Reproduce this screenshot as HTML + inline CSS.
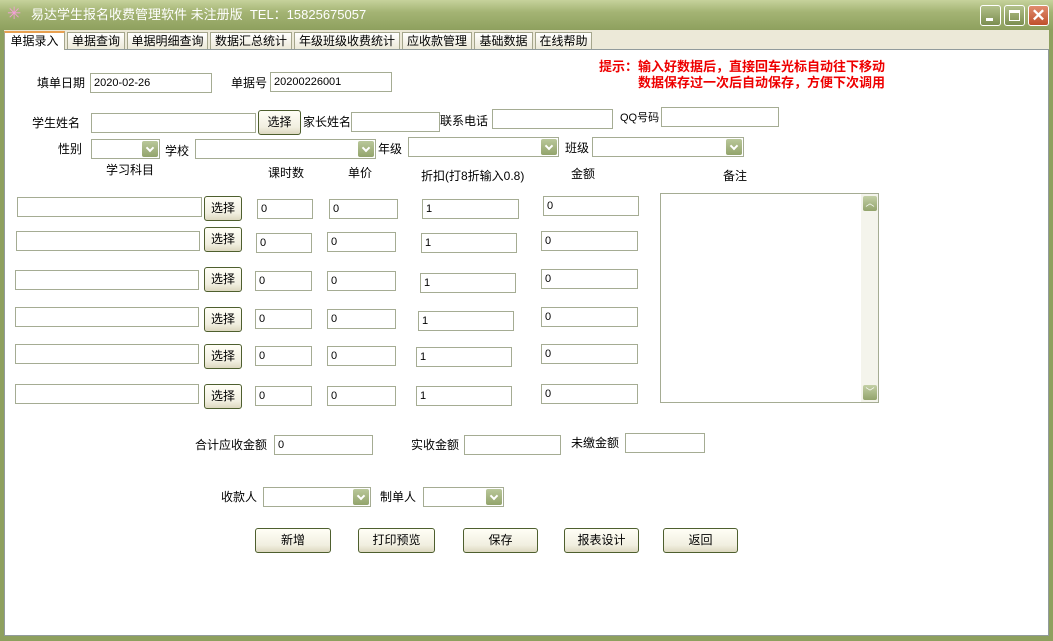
<!DOCTYPE html>
<html><head><meta charset="utf-8"><style>
*{margin:0;padding:0;box-sizing:border-box}
body{width:1053px;height:641px;overflow:hidden;position:relative;background:#ece9d8;font-family:"Liberation Sans","Noto Sans CJK SC","WenQuanYi Zen Hei",sans-serif;font-size:12px;color:#000}
.a{position:absolute}
.tb{left:0;top:0;width:1053px;height:30px;background:linear-gradient(#c6d29c,#a4b474 40%,#8ea05e);}
.t{white-space:nowrap;line-height:16px}
.i{position:absolute;height:20px;border:1px solid #a5ac93;background:#fff;font-size:11px;line-height:18px;padding-left:3px}
.b{position:absolute;height:25px;border:1px solid #4e5f2e;border-radius:3px;background:linear-gradient(#fffef6,#f1efe0 70%,#dcd8c0);text-align:center;line-height:23px;font-size:12px}
.c{position:absolute;height:20px;border:1px solid #a5ac93;background:#fff}
.c:after{content:"";position:absolute;right:1px;top:1px;width:16px;height:16px;background:linear-gradient(#b9c79a,#93a46c);border-radius:2px}
.c:before{content:"";position:absolute;right:6px;top:5px;width:4px;height:4px;border-right:2px solid #fff;border-bottom:2px solid #fff;transform:rotate(45deg);z-index:2}
.tab{position:absolute;top:32px;height:17px;border:1px solid #a5a68c;border-bottom:none;background:linear-gradient(#fff,#ece9d8);font-size:12px;line-height:16px;text-align:center}
</style></head><body>
<div class="a tb"></div>
<div class="a" style="left:0;top:30px;width:4px;height:611px;background:#8ea05e"></div>
<div class="a" style="right:0;top:30px;width:4px;height:611px;background:#8ea05e"></div>
<div class="a" style="left:0;top:636px;width:1053px;height:5px;background:#8ea05e"></div>
<div class="a t" style="left:7px;top:6px;color:#f4a0d8;font-size:17px">✳</div>
<div class="a t" style="left:31px;top:7px;color:#fff;font-size:13px">易达学生报名收费管理软件 未注册版&nbsp; TEL：15825675057</div>
<div class="a" style="left:980px;top:5px;width:21px;height:21px;border:1px solid #fff;border-radius:3px;background:linear-gradient(#b2c08a,#7c8e50)"><div class="a" style="left:5px;top:12px;width:7px;height:3px;background:#fff"></div></div>
<div class="a" style="left:1004px;top:5px;width:21px;height:21px;border:1px solid #fff;border-radius:3px;background:linear-gradient(#b2c08a,#7c8e50)"><div class="a" style="left:4px;top:4px;width:11px;height:11px;border:1px solid #fff;border-top-width:3px"></div></div>
<div class="a" style="left:1028px;top:5px;width:21px;height:21px;border:1px solid #fff;border-radius:3px;background:linear-gradient(#e08c6e,#c0502c);color:#fff;font-size:17px;line-height:19px;text-align:center;font-weight:bold">✕</div>
<div class="a" style="left:4px;top:49px;width:1045px;height:587px;background:#fff;border:1px solid #919b9c"></div>
<div class="tab" style="left:4px;width:61px;top:31px;height:19px;background:#fff;border-top:2px solid #e8a050">单据录入</div>
<div class="tab" style="left:67px;width:58px">单据查询</div>
<div class="tab" style="left:127px;width:81px">单据明细查询</div>
<div class="tab" style="left:210px;width:82px">数据汇总统计</div>
<div class="tab" style="left:294px;width:106px">年级班级收费统计</div>
<div class="tab" style="left:402px;width:70px">应收款管理</div>
<div class="tab" style="left:474px;width:59px">基础数据</div>
<div class="tab" style="left:535px;width:57px">在线帮助</div>

<div class="a t" style="left:599px;top:59px;color:#e00;font-weight:bold;font-size:13px">提示：输入好数据后，直接回车光标自动往下移动</div>
<div class="a t" style="left:638px;top:75px;color:#e00;font-weight:bold;font-size:13px">数据保存过一次后自动保存，方便下次调用</div>

<div class="a t" style="left:37px;top:75px">填单日期</div><div class="i" style="left:90px;top:73px;width:122px">2020-02-26</div>
<div class="a t" style="left:231px;top:75px">单据号</div><div class="i" style="left:270px;top:72px;width:122px">20200226001</div>

<div class="a t" style="left:32px;top:115px">学生姓名</div><div class="i" style="left:91px;top:113px;width:165px"></div>
<div class="b" style="left:258px;top:110px;width:43px">选择</div>
<div class="a t" style="left:303px;top:114px">家长姓名</div><div class="i" style="left:351px;top:112px;width:89px"></div>
<div class="a t" style="left:440px;top:113px">联系电话</div><div class="i" style="left:492px;top:109px;width:121px"></div>
<div class="a t" style="left:620px;top:110px;font-size:11px">QQ号码</div><div class="i" style="left:661px;top:107px;width:118px"></div>

<div class="a t" style="left:58px;top:141px">性别</div><div class="c" style="left:91px;top:139px;width:69px"></div>
<div class="a t" style="left:165px;top:143px">学校</div><div class="c" style="left:195px;top:139px;width:181px"></div>
<div class="a t" style="left:378px;top:141px">年级</div><div class="c" style="left:408px;top:137px;width:151px"></div>
<div class="a t" style="left:565px;top:140px">班级</div><div class="c" style="left:592px;top:137px;width:152px"></div>

<div class="a t" style="left:106px;top:162px">学习科目</div>
<div class="a t" style="left:268px;top:165px">课时数</div>
<div class="a t" style="left:348px;top:165px">单价</div>
<div class="a t" style="left:421px;top:168px">折扣(打8折输入0.8)</div>
<div class="a t" style="left:571px;top:166px">金额</div>
<div class="a t" style="left:723px;top:168px">备注</div>

<div class="i" style="left:17px;top:197px;width:185px"></div><div class="b" style="left:204px;top:196px;width:38px">选择</div>
<div class="i" style="left:257px;top:199px;width:56px">0</div><div class="i" style="left:329px;top:199px;width:69px">0</div><div class="i" style="left:422px;top:199px;width:97px">1</div><div class="i" style="left:543px;top:196px;width:96px">0</div>

<div class="i" style="left:16px;top:231px;width:184px"></div><div class="b" style="left:204px;top:227px;width:38px">选择</div>
<div class="i" style="left:256px;top:233px;width:56px">0</div><div class="i" style="left:327px;top:232px;width:69px">0</div><div class="i" style="left:421px;top:233px;width:96px">1</div><div class="i" style="left:541px;top:231px;width:97px">0</div>

<div class="i" style="left:15px;top:270px;width:184px"></div><div class="b" style="left:204px;top:267px;width:38px">选择</div>
<div class="i" style="left:255px;top:271px;width:57px">0</div><div class="i" style="left:327px;top:271px;width:69px">0</div><div class="i" style="left:420px;top:273px;width:96px">1</div><div class="i" style="left:541px;top:269px;width:97px">0</div>

<div class="i" style="left:15px;top:307px;width:184px"></div><div class="b" style="left:204px;top:307px;width:38px">选择</div>
<div class="i" style="left:255px;top:309px;width:57px">0</div><div class="i" style="left:327px;top:309px;width:69px">0</div><div class="i" style="left:418px;top:311px;width:96px">1</div><div class="i" style="left:541px;top:307px;width:97px">0</div>

<div class="i" style="left:15px;top:344px;width:184px"></div><div class="b" style="left:204px;top:344px;width:38px">选择</div>
<div class="i" style="left:255px;top:346px;width:57px">0</div><div class="i" style="left:327px;top:346px;width:69px">0</div><div class="i" style="left:416px;top:347px;width:96px">1</div><div class="i" style="left:541px;top:344px;width:97px">0</div>

<div class="i" style="left:15px;top:384px;width:184px"></div><div class="b" style="left:204px;top:384px;width:38px">选择</div>
<div class="i" style="left:255px;top:386px;width:57px">0</div><div class="i" style="left:327px;top:386px;width:69px">0</div><div class="i" style="left:416px;top:386px;width:96px">1</div><div class="i" style="left:541px;top:384px;width:97px">0</div>

<div class="a" style="left:660px;top:193px;width:219px;height:210px;border:1px solid #a5ac93;background:#fff">
<div class="a" style="right:0;top:0;width:17px;height:208px;background:#f4f4ec"></div>
<div class="a" style="right:1px;top:2px;width:14px;height:15px;background:linear-gradient(#c3cfa6,#93a46c);border-radius:2px;color:#fff;font-size:9px;text-align:center;line-height:15px">︿</div>
<div class="a" style="right:1px;bottom:2px;width:14px;height:15px;background:linear-gradient(#c3cfa6,#93a46c);border-radius:2px;color:#fff;font-size:9px;text-align:center;line-height:15px">﹀</div>
</div>

<div class="a t" style="left:195px;top:437px">合计应收金额</div><div class="i" style="left:274px;top:435px;width:99px">0</div>
<div class="a t" style="left:411px;top:437px">实收金额</div><div class="i" style="left:464px;top:435px;width:97px"></div>
<div class="a t" style="left:571px;top:435px">未缴金额</div><div class="i" style="left:625px;top:433px;width:80px"></div>

<div class="a t" style="left:221px;top:489px">收款人</div><div class="c" style="left:263px;top:487px;width:108px"></div>
<div class="a t" style="left:380px;top:489px">制单人</div><div class="c" style="left:423px;top:487px;width:81px"></div>

<div class="b" style="left:255px;top:528px;width:76px">新增</div>
<div class="b" style="left:358px;top:528px;width:77px">打印预览</div>
<div class="b" style="left:463px;top:528px;width:75px">保存</div>
<div class="b" style="left:564px;top:528px;width:75px">报表设计</div>
<div class="b" style="left:663px;top:528px;width:75px">返回</div>
</body></html>
